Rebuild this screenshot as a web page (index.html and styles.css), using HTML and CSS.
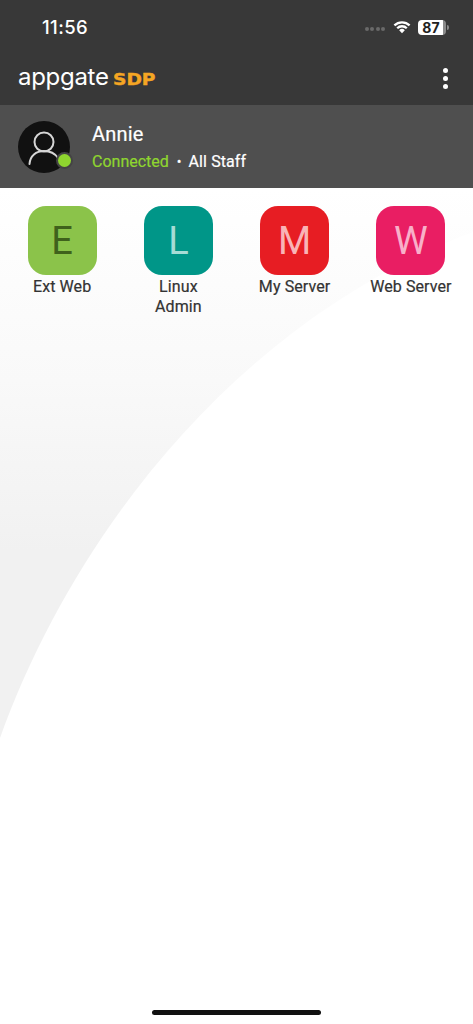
FILE: index.html
```html
<!DOCTYPE html>
<html lang="en">
<head>
    <meta charset="UTF-8">
    <title>Appgate SDP</title>
    <meta name="viewport" content="width=device-width, initial-scale=1">
    <link rel="stylesheet" href="styles.css">
</head>
<body>
<div class="screen">
    <!-- Background swoosh -->
    <svg class="swoosh" viewBox="0 0 473 836" aria-hidden="true">
        <defs>
            <linearGradient id="swooshFill" x1="0" y1="0" x2="0" y2="1">
                <stop offset="0" stop-color="#ffffff"/>
                <stop offset="0.35" stop-color="#f9f9f9"/>
                <stop offset="0.66" stop-color="#f1f1f1"/>
            </linearGradient>
        </defs>
        <path d="M0 0H473V44C240 132 75 342 0 550Z" fill="url(#swooshFill)"/>
    </svg>

    <div class="topbar">
        <div class="status-bar">
            <span class="clock">11:56</span>
            <div class="status-icons">
                <span class="signal"><i></i><i></i><i></i><i></i></span>
                <svg class="wifi" viewBox="0 0 18 14">
                    <path d="M0.6 4.6A12 12 0 0 1 17.4 4.6L15.8 6.3A9.7 9.7 0 0 0 2.2 6.3Z" fill="#fff"/>
                    <path d="M3.4 7.4A8 8 0 0 1 14.6 7.4L13 9.1A5.7 5.7 0 0 0 5 9.1Z" fill="#fff"/>
                    <path d="M6.2 10.2A4 4 0 0 1 11.8 10.2L9 13.2Z" fill="#fff"/>
                </svg>
                <span class="battery"><span class="battery-level">87</span></span>
                <span class="battery-tip"></span>
            </div>
        </div>
        <div class="brand-row">
            <div class="logo">
                <span class="logo-name">appgate</span>
                <span class="logo-sdp">SDP</span>
            </div>
            <div class="menu-dots"><i></i><i></i><i></i></div>
        </div>
    </div>

    <div class="user-bar">
        <div class="avatar">
            <svg viewBox="0 0 52 52" width="52" height="52">
                <circle cx="26" cy="21" r="9.5" fill="none" stroke="#d6d6d6" stroke-width="2"/>
                <path d="M11.500 43C12 35 18 30 26 30C32 30 37 32.500 40 37" fill="none" stroke="#d6d6d6" stroke-width="2" stroke-linecap="round"/>
            </svg>
            <span class="online-dot"></span>
        </div>
        <div class="user-info">
            <div class="user-name">Annie</div>
            <div class="user-status">
                <span class="connected">Connected</span>
                <span class="sep">•</span>
                <span class="group">All Staff</span>
            </div>
        </div>
    </div>

    <div class="app-grid">
        <div class="app-item">
            <div class="app-icon green">E</div>
            <div class="app-label">Ext Web</div>
        </div>
        <div class="app-item">
            <div class="app-icon teal">L</div>
            <div class="app-label">Linux Admin</div>
        </div>
        <div class="app-item">
            <div class="app-icon red">M</div>
            <div class="app-label">My Server</div>
        </div>
        <div class="app-item">
            <div class="app-icon pink">W</div>
            <div class="app-label">Web Server</div>
        </div>
    </div>

    <div class="home-indicator"></div>
</div>
</body>
</html>
```

FILE: styles.css
```css
html, body { margin: 0; padding: 0; background: #fff; }
body { font-family: Roboto, "Liberation Sans", sans-serif; }
.screen { position: relative; width: 473px; height: 1024px; overflow: hidden; background: #fff; display: flex; flex-direction: column; }
.swoosh { position: absolute; left: 0; top: 188px; width: 473px; height: 836px; }

.topbar { position: relative; height: 105px; background: #383838; flex: none; }
.status-bar { display: flex; justify-content: space-between; align-items: center; height: 54px; padding: 0 24px 0 42px; }
.clock { color: #fff; font-family: Inter, sans-serif; font-size: 18.5px; font-weight: 500; letter-spacing: 0.4px; }
.status-icons { display: flex; align-items: center; }
.signal { display: flex; gap: 1.500px; margin-right: 8px; margin-top: 4px; }
.signal i { width: 4px; height: 4px; border-radius: 50%; background: #6a6a6a; }
.wifi { width: 18px; height: 14px; margin-right: 7px; }
.battery { display: block; width: 28px; height: 15px; border-radius: 4px; background: linear-gradient(90deg, #fff 88%, #8a8a8a 88%); }
.battery-level { display: block; padding-right: 2px; color: #222; font-family: Inter, sans-serif; font-size: 14px; font-weight: 700; line-height: 15px; text-align: center; }
.battery-tip { width: 2px; height: 5px; margin-left: 1px; background: #8a8a8a; border-radius: 0 2px 2px 0; }
.brand-row { display: flex; justify-content: space-between; align-items: center; padding: 0 25px 0 18px; height: 48px; }
.logo { display: flex; align-items: baseline; margin-top: -3px; }
.logo-name { color: #fff; font-family: Inter, sans-serif; font-size: 24px; line-height: 28px; letter-spacing: -0.3px; }
.logo-sdp { color: #f5a623; font-family: "DejaVu Sans", sans-serif; font-weight: 700; font-size: 15px; margin-left: 4px; transform: scaleX(1.24); transform-origin: left center; -webkit-text-stroke: 0.4px #f5a623; }
.menu-dots { display: flex; flex-direction: column; gap: 3px; }
.menu-dots i { width: 5px; height: 5px; border-radius: 50%; background: #fff; }

.user-bar { position: relative; display: flex; align-items: center; height: 83px; padding-left: 18px; background: #4f4f4f; flex: none; }
.avatar { position: relative; width: 52px; height: 52px; border-radius: 50%; background: #111; }
.online-dot { position: absolute; right: -1px; bottom: 6px; width: 13px; height: 13px; border-radius: 50%; background: #8fd62f; box-shadow: 0 0 0 2px #444; }
.user-info { margin: 2px 0 0 22px; -webkit-text-stroke: 0.2px; }
.user-name { color: #fff; font-size: 20px; line-height: 26px; letter-spacing: 0.2px; }
.user-status { display: flex; align-items: center; font-size: 16px; line-height: 24px; margin-top: 3px; }
.connected { color: #8fd62f; }
.sep { color: #fff; font-size: 14px; margin: 0 7px 0 8px; }
.group { color: #fff; letter-spacing: 0.1px; }

.app-grid { position: relative; display: grid; grid-template-columns: repeat(4, 1fr); padding: 18px 4px 0; }
.app-item { display: flex; flex-direction: column; align-items: center; }
.app-icon { width: 69px; height: 69px; border-radius: 18px; display: flex; align-items: center; justify-content: center; font-size: 38px; }
.app-icon.green { background: #8bc34a; color: #3f611c; }
.app-icon.teal { background: #009688; color: #a6dcd6; }
.app-icon.red { background: #e71d23; color: #f9b4b7; }
.app-icon.pink { background: #e91e63; color: #f8b0c9; }
.app-label { width: 84px; margin-top: 2px; color: #333; font-size: 16px; line-height: 19.500px; letter-spacing: 0.1px; text-align: center; -webkit-text-stroke: 0.2px #333; }

.home-indicator { position: absolute; left: 152px; bottom: 9px; width: 169px; height: 5px; border-radius: 3px; background: #111; }
```
